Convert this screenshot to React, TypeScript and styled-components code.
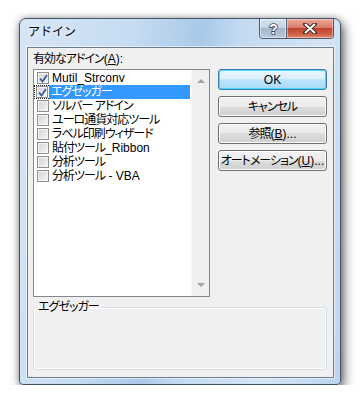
import styled, { createGlobalStyle } from 'styled-components'

type TAddin = {
	name: string
	checked: boolean
	selected?: boolean
}

const addins: TAddin[] = [
	{ name: 'Mutil_Strconv', checked: true },
	{ name: 'エグゼッガー', checked: true, selected: true },
	{ name: 'ソルバー アドイン', checked: false },
	{ name: 'ユーロ通貨対応ツール', checked: false },
	{ name: 'ラベル印刷ウィザード', checked: false },
	{ name: '貼付ツール_Ribbon', checked: false },
	{ name: '分析ツール', checked: false },
	{ name: '分析ツール - VBA', checked: false },
]

// 英数字は字間を詰めない
const MixedText = ({ text }: { text: string }) => (
	<>
		{text
			.split(/( ?[\x21-\x7e]+(?: [\x21-\x7e]+)*)/)
			.filter(Boolean)
			.map((part, i) => (/[\x21-\x7e]/.test(part) ? <Latin key={i}>{part}</Latin> : part))}
	</>
)

const CheckBox = ({ checked }: { checked: boolean }) => (
	<Box>
		{checked && (
			<svg width='9' height='9' viewBox='0 0 9 9'>
				<path d='M1 4.5 L3.5 7.5 L8 1' fill='none' stroke='#3c5aa0' strokeWidth='1.8' />
			</svg>
		)}
	</Box>
)

const App = () => {
	return (
		<>
			<GlobalStyle />
			<Window>
				<TitleBar>
					<Title>アドイン</Title>
					<Caption>
						<HelpButton>
							<svg width='14' height='14' viewBox='0 0 14 14'>
								<text
									x='7'
									y='12'
									textAnchor='middle'
									fontFamily='Liberation Sans, sans-serif'
									fontWeight='bold'
									fontSize='14'
									fill='#fff'
									stroke='#3b4656'
									strokeWidth='1.6'
									paintOrder='stroke'
								>
									?
								</text>
							</svg>
						</HelpButton>
						<CloseButton>
							<svg width='14' height='11' viewBox='0 0 14 11'>
								<path
									d='M2 1 L12 10 M12 1 L2 10'
									stroke='#3b2a28'
									strokeWidth='4'
									strokeLinecap='round'
								/>
								<path d='M2 1 L12 10 M12 1 L2 10' stroke='#fff' strokeWidth='2' />
							</svg>
						</CloseButton>
					</Caption>
				</TitleBar>
				<Client>
					<Main>
						<ListColumn>
							<Label>
								有効なアドイン
								<Latin>
									(<u>A</u>):
								</Latin>
							</Label>
							<ListBox>
								<Items>
									{addins.map(a => (
										<Row key={a.name}>
											<CheckCell $selected={a.selected}>
												<CheckBox checked={a.checked} />
											</CheckCell>
											<ItemText $selected={a.selected}>
												<MixedText text={a.name} />
											</ItemText>
										</Row>
									))}
								</Items>
								<ScrollBar>
									<Arrow $up />
									<Arrow />
								</ScrollBar>
							</ListBox>
						</ListColumn>
						<Buttons>
							<Button $default>
								<Latin>OK</Latin>
							</Button>
							<Button>キャンセル</Button>
							<Button>
								参照
								<Latin>
									(<u>B</u>)...
								</Latin>
							</Button>
							<Button>
								オートメーション
								<Latin>
									(<u>U</u>)...
								</Latin>
							</Button>
						</Buttons>
					</Main>
					<Group>
						<Legend>エグゼッガー</Legend>
					</Group>
				</Client>
			</Window>
		</>
	)
}

export default App

const GlobalStyle = createGlobalStyle`
	html, body {
		margin: 0;
		padding: 0;
		background: #fff;
	}
	body {
		font-family: "Liberation Sans", "Noto Sans CJK JP", sans-serif;
		font-size: 12px;
		letter-spacing: -1px;
		font-feature-settings: 'palt';
		color: #000;
	}
`

const Latin = styled.span`
	letter-spacing: 0;
`

const Window = styled.div`
	box-sizing: border-box;
	margin: 18px 0 0 19px;
	width: 322px;
	height: 367px;
	display: flex;
	flex-direction: column;
	border: 1px solid #44546a;
	border-radius: 7px 7px 4px 4px;
	background: linear-gradient(100deg, #d6e6f6 0%, #c6dcf2 30%, #a9c9e8 48%, #c3daf1 58%, #d3e4f5 80%, #bcd4ee 100%);
	box-shadow: 3px 5px 12px rgba(0, 0, 0, 0.55), 0 0 6px rgba(0, 0, 0, 0.3);
	padding: 0 6px 6px 7px;
`

const TitleBar = styled.div`
	height: 28px;
	display: flex;
	justify-content: space-between;
	align-items: flex-start;
`

const Title = styled.div`
	font-size: 12px;
	letter-spacing: 0;
	font-feature-settings: normal;
	line-height: 14px;
	padding: 6px 0 0 1px;
	color: #000;
	text-shadow: 0 0 6px rgba(255, 255, 255, 0.9);
`

const Caption = styled.div`
	display: flex;
	height: 19px;
	border: 1px solid #4d5b6c;
	border-top: none;
	border-radius: 0 0 4px 4px;
	overflow: hidden;
`

const HelpButton = styled.div`
	width: 26px;
	display: flex;
	align-items: center;
	justify-content: center;
	border-right: 1px solid #5a6676;
	background: linear-gradient(#d5e2ef 0%, #c3d3e3 45%, #a5b8cc 50%, #b7c9dc 100%);
	box-shadow: inset 0 0 0 1px rgba(255, 255, 255, 0.5);
`

const CloseButton = styled.div`
	width: 46px;
	display: flex;
	align-items: center;
	justify-content: center;
	background: linear-gradient(#e9a99a 0%, #da7d68 45%, #c0442d 50%, #d2654c 85%, #e4957f 100%);
	box-shadow: inset 0 0 0 1px rgba(255, 220, 210, 0.5);
`

const Client = styled.div`
	flex: 1;
	display: flex;
	flex-direction: column;
	gap: 3px;
	border: 1px solid #6b7c90;
	background: #f0f0f0;
	padding: 4px 6px 7px 5px;
	box-shadow: 0 0 0 1px rgba(255, 255, 255, 0.6);
`

const Main = styled.div`
	display: flex;
	gap: 8px;
`

const ListColumn = styled.div`
	display: flex;
	flex-direction: column;
	gap: 3px;
`

const Label = styled.div`
	line-height: 14px;
	white-space: nowrap;
`

const ListBox = styled.div`
	width: 175px;
	height: 226px;
	display: flex;
	border: 1px solid #828790;
	background: #fff;
`

const Items = styled.div`
	flex: 1;
	padding-top: 1px;
	display: flex;
	flex-direction: column;
`

const Row = styled.div`
	height: 14px;
	display: flex;
	align-items: stretch;
	line-height: 14px;
`

const CheckCell = styled.div<{ $selected?: boolean }>`
	box-sizing: border-box;
	width: 15px;
	display: flex;
	align-items: center;
	border: 1px dotted ${p => (p.$selected ? '#222' : 'transparent')};
	border-right: none;
	padding-left: ${p => (p.$selected ? '1px' : '2px')};
`

const Box = styled.div`
	box-sizing: border-box;
	width: 12px;
	height: 12px;
	border: 1px solid #8e8f8f;
	background: linear-gradient(135deg, #d4d4d4 0%, #e8e8e8 60%, #f6f6f6 100%);
	box-shadow: inset 0 0 0 1px #f4f4f4;
	display: flex;
	align-items: center;
	justify-content: center;
`

const ItemText = styled.div<{ $selected?: boolean }>`
	box-sizing: border-box;
	flex: 1;
	margin-right: ${p => (p.$selected ? '1px' : '0')};
	padding-left: ${p => (p.$selected ? '2px' : '3px')};
	white-space: nowrap;
	color: ${p => (p.$selected ? '#fff' : '#000')};
	background: ${p => (p.$selected ? '#3399ff' : 'transparent')};
	border: 1px dotted ${p => (p.$selected ? '#e07a20' : 'transparent')};
	border-left: none;
	line-height: 12px;
`

const ScrollBar = styled.div`
	width: 17px;
	display: flex;
	flex-direction: column;
	justify-content: space-between;
	align-items: center;
	padding: 9px 0 9px;
	background: #efefef;
	border-left: 1px solid #f8f8f8;
`

const Arrow = styled.div<{ $up?: boolean }>`
	width: 0;
	height: 0;
	border-left: 4px solid transparent;
	border-right: 4px solid transparent;
	${p => (p.$up ? 'border-bottom: 4px solid #a4a4a4;' : 'border-top: 4px solid #a4a4a4;')}
`

const Buttons = styled.div`
	padding-top: 17px;
	display: flex;
	flex-direction: column;
	gap: 6px;
`

const Button = styled.div<{ $default?: boolean }>`
	box-sizing: border-box;
	width: 109px;
	height: 21px;
	display: flex;
	align-items: center;
	justify-content: center;
	white-space: nowrap;
	border: 1px solid ${p => (p.$default ? '#3c7fb1' : '#707070')};
	border-radius: 3px;
	background: ${p =>
		p.$default
			? 'linear-gradient(#eaf6fd 0%, #d9f0fc 50%, #bee6fd 50%, #a7d9f5 100%)'
			: 'linear-gradient(#f2f2f2 0%, #ebebeb 50%, #dddddd 50%, #cfcfcf 100%)'};
	box-shadow: inset 0 0 0 1px ${p => (p.$default ? '#48d7f8' : '#fcfcfc')};
	line-height: 14px;
`

const Group = styled.fieldset`
	margin: 0;
	padding: 0;
	height: 70px;
	box-sizing: border-box;
	border: 1px solid #d5dfe5;
	border-radius: 3px;
	box-shadow: inset 0 0 0 1px #fff;
`

const Legend = styled.legend`
	padding: 0 2px;
	margin-left: 2px;
	line-height: 14px;
`
